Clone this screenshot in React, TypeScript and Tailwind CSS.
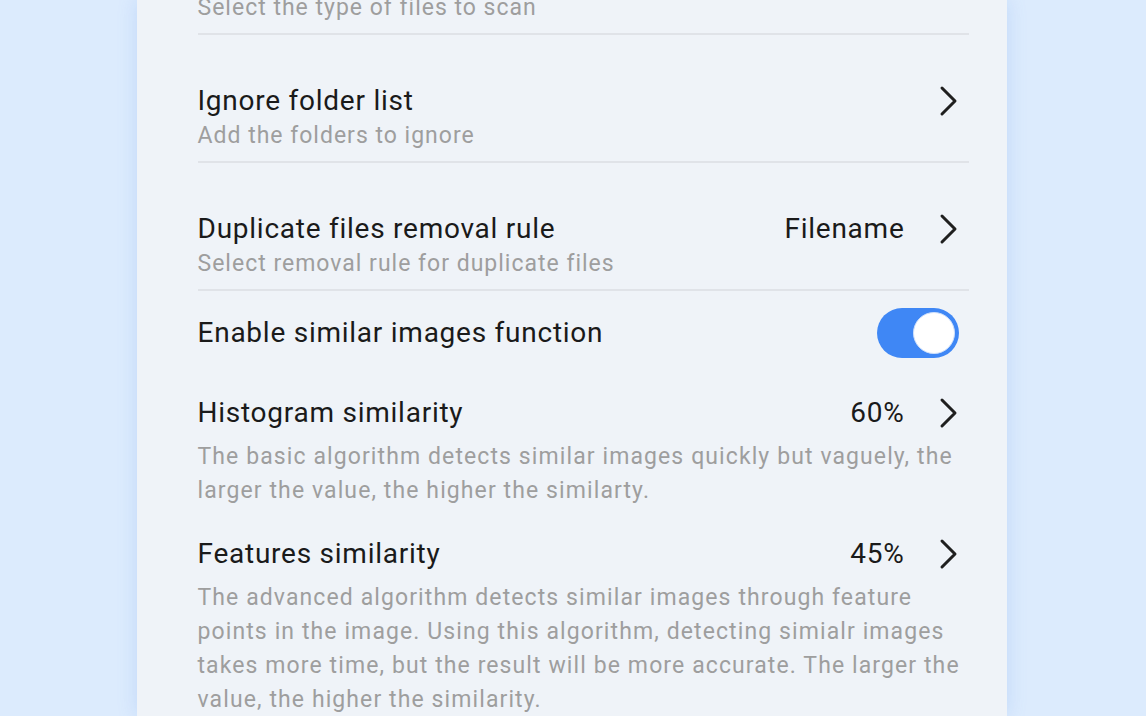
import React from 'react';

const Chevron = () => (
  <svg width="22" height="32" viewBox="0 0 22 32" className="shrink-0">
    <polyline points="5,3 18,16 5,29" fill="none" stroke="#1f1f1f" strokeWidth="3" strokeLinecap="round" strokeLinejoin="round" />
  </svg>
);

const Toggle = ({ on }: { on: boolean }) => (
  <div className={`w-[82px] h-[50px] rounded-full p-[4px] flex items-center ${on ? 'bg-[#3f87f5] justify-end' : 'bg-gray-300 justify-start'}`}>
    <div className="w-[42px] h-[42px] rounded-full bg-white border border-[#cfe0fb]" />
  </div>
);

type Row = { title: string; subtitle: string; value?: string };

const rows: Row[] = [
  { title: 'Scan file types', subtitle: 'Select the type of files to scan' },
  { title: 'Ignore folder list', subtitle: 'Add the folders to ignore' },
  { title: 'Duplicate files removal rule', subtitle: 'Select removal rule for duplicate files', value: 'Filename' },
];

// lines split the way the app wraps them
const sliders = [
  {
    title: 'Histogram similarity',
    value: '60%',
    lines: [
      'The basic algorithm detects similar images quickly but vaguely, the',
      'larger the value, the higher the similarty.',
    ],
  },
  {
    title: 'Features similarity',
    value: '45%',
    lines: [
      'The advanced algorithm detects similar images through feature',
      'points in the image. Using this algorithm, detecting simialr images',
      'takes more time, but the result will be more accurate. The larger the',
      'value, the higher the similarity.',
    ],
  },
];

const titleCls = 'text-[28px] leading-[36px] tracking-[0.75px] text-[#1a1a1a] whitespace-nowrap';

export default function App() {
  return (
    <div className="w-[1146px] h-[716px] overflow-hidden bg-[#dcebfd] flex justify-center font-['Roboto',sans-serif]">
      <div className="w-[870px] h-full ml-[-3px] bg-[#eff3f8] shadow-[0_0_18px_rgba(96,150,235,0.22)] overflow-hidden">
        <div className="pl-[61px] pr-[38px] mt-[-93px]">
          {rows.map((row) => (
            <div key={row.title} className="pt-[48px] pb-[8px] border-b-2 border-[#e0e3e8]">
              <div className="flex items-center justify-between pr-[10px]">
                <div className={titleCls}>{row.title}</div>
                <div className="flex items-center gap-[32px]">
                  {row.value && <span className={titleCls}>{row.value}</span>}
                  <Chevron />
                </div>
              </div>
              <div className="text-[23px] leading-[34px] tracking-[1px] text-[#9e9e9e] whitespace-nowrap">{row.subtitle}</div>
            </div>
          ))}

          <div className="pt-[17px] flex items-center justify-between pr-[10px]">
            <div className={titleCls}>Enable similar images function</div>
            <Toggle on />
          </div>

          {sliders.map((s, i) => (
            <div key={s.title} className={i === 0 ? 'pt-[37px]' : 'pt-[28px]'}>
              <div className="flex items-center justify-between pr-[10px]">
                <div className={titleCls}>{s.title}</div>
                <div className="flex items-center gap-[32px]">
                  <span className={titleCls}>{s.value}</span>
                  <Chevron />
                </div>
              </div>
              <div className="mt-[9px] text-[23px] leading-[34px] tracking-[1.1px] text-[#9e9e9e]">
                {s.lines.map((l) => (
                  <div key={l} className="whitespace-nowrap">{l}</div>
                ))}
              </div>
            </div>
          ))}
        </div>
      </div>
    </div>
  );
}
